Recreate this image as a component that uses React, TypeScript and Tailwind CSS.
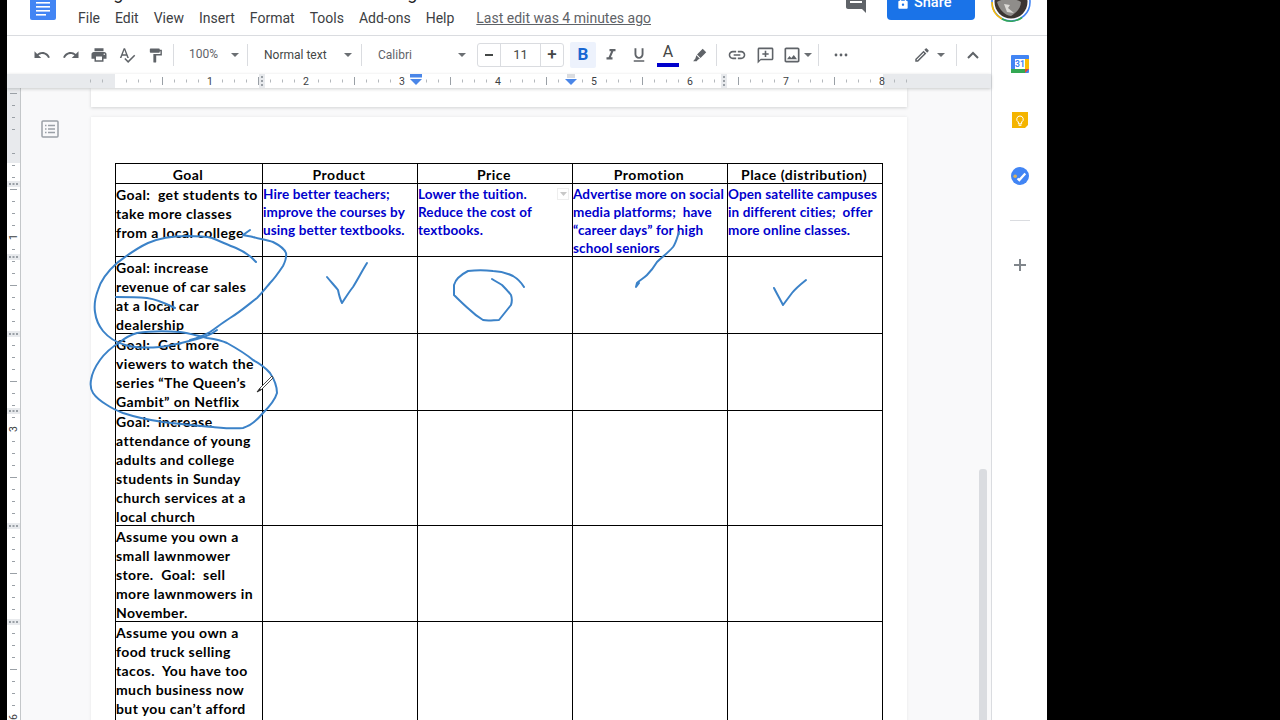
import React from "react";

const Ico = ({ d, s = 18, c = "#5f6368" }: { d: string; s?: number; c?: string }) => (
  <svg width={s} height={s} viewBox="0 0 24 24" fill={c}><path d={d} /></svg>
);
const Box = ({ children, className = "" }: { children: React.ReactNode; className?: string }) => (
  <span className={"flex w-7 shrink-0 items-center justify-center " + className}>{children}</span>
);
const Caret = ({ className = "" }: { className?: string }) => (
  <span className={"flex w-[10px] shrink-0 justify-center " + className}>
    <svg width="8" height="4" viewBox="0 0 8 4" fill="#6b6f73"><path d="M0 0h8L4 4z" /></svg>
  </span>
);
const Sep = ({ className = "" }: { className?: string }) => <span className={"h-[22px] w-px shrink-0 bg-[#dadce0] " + className} />;

const P = {
  undo: "M12.5 8c-2.65 0-5.05.99-6.9 2.6L2 7v9h9l-3.62-3.62c1.39-1.16 3.16-1.88 5.12-1.88 3.54 0 6.55 2.31 7.6 5.5l2.37-.78C21.08 11.03 17.15 8 12.5 8z",
  redo: "M18.4 10.6C16.55 8.99 14.15 8 11.5 8c-4.65 0-8.58 3.03-9.96 7.22L3.9 16c1.05-3.19 4.05-5.5 7.6-5.5 1.95 0 3.73.72 5.12 1.88L13 16h9V7l-3.6 3.6z",
  print: "M19 8H5c-1.66 0-3 1.34-3 3v6h4v4h12v-4h4v-6c0-1.66-1.34-3-3-3zm-3 11H8v-5h8v5zm3-7c-.55 0-1-.45-1-1s.45-1 1-1 1 .45 1 1-.45 1-1 1zm-1-9H6v4h12V3z",
  spell: "M12.45 16h2.09L9.43 3H7.57L2.46 16h2.09l1.12-3h5.64l1.14 3zm-6.02-5L8.5 5.48 10.57 11H6.43zm15.16.59l-8.09 8.09L9.83 16l-1.41 1.41 5.09 5.09L23 13l-1.41-1.41z",
  paint: "M18 4V3c0-.55-.45-1-1-1H5c-.55 0-1 .45-1 1v4c0 .55.45 1 1 1h12c.55 0 1-.45 1-1V6h1v4H9v11c0 .55.45 1 1 1h2c.55 0 1-.45 1-1v-9h8V4h-3z",
  link: "M3.9 12c0-1.71 1.39-3.1 3.1-3.1h4V7H7c-2.76 0-5 2.24-5 5s2.24 5 5 5h4v-1.9H7c-1.71 0-3.1-1.39-3.1-3.1zM8 13h8v-2H8v2zm9-6h-4v1.9h4c1.71 0 3.1 1.39 3.1 3.1s-1.39 3.1-3.1 3.1h-4V17h4c2.76 0 5-2.24 5-5s-2.24-5-5-5z",
  addc: "M20 2H4c-1.1 0-2 .9-2 2v18l4-4h14c1.1 0 2-.9 2-2V4c0-1.1-.9-2-2-2zm0 14H6l-2 2V4h16v12zm-9-2h2v-3h3V9h-3V6h-2v3H8v2h3z",
  img: "M19 5v14H5V5h14m0-2H5c-1.1 0-2 .9-2 2v14c0 1.1.9 2 2 2h14c1.1 0 2-.9 2-2V5c0-1.1-.9-2-2-2zm-4.86 8.86l-3 3.87L9 13.14 6 17h12l-3.86-5.14z",
  pencil: "M14.06 9.02l.92.92L5.92 19H5v-.92l9.06-9.06M17.66 3c-.25 0-.51.1-.7.29l-1.83 1.83 3.75 3.75 1.83-1.83c.39-.39.39-1.02 0-1.41l-2.34-2.34c-.2-.2-.45-.29-.71-.29zm-3.6 3.19L3 17.25V21h3.75L17.81 9.94l-3.75-3.75z",
  pen: "M16.5 2.5l5 5-8 8-5-5zM7.5 11.5l5 5-2.5 1.2-2 2.3H3l3.2-3.6z",
  comment: "M4 2h16c1.1 0 2 .9 2 2v18l-4-4H4c-1.1 0-2-.9-2-2V4c0-1.1.9-2 2-2zm2 10h12v-2H6v2zm0-3h12V7H6v2zm0-3h12V4H6v2z",
  lock: "M18 8h-1V6c0-2.76-2.24-5-5-5S7 3.24 7 6v2H6c-1.1 0-2 .9-2 2v10c0 1.1.9 2 2 2h12c1.1 0 2-.9 2-2V10c0-1.1-.9-2-2-2zm-6 9c-1.1 0-2-.9-2-2s.9-2 2-2 2 .9 2 2-.9 2-2 2zm3.1-9H8.9V6c0-1.71 1.39-3.1 3.1-3.1 1.71 0 3.1 1.39 3.1 3.1v2z",
  italic: "M10 4v3h2.21l-3.42 8H6v3h8v-3h-2.21l3.42-8H18V4z",
  under: "M12 17c3.31 0 6-2.69 6-6V3h-2.5v8c0 1.93-1.57 3.5-3.5 3.5S8.5 12.93 8.5 11V3H6v8c0 3.31 2.69 6 6 6zm-7 2v2h14v-2H5z",
};

const Ruler = () => {
  const ox = 7;
  const ticks: React.ReactNode[] = [];
  for (let x = 90; x <= 906; x += 12) {
    const rel = x - 114;
    if (rel % 96 === 0) continue;
    const half = rel % 48 === 0;
    ticks.push(<rect key={x} x={x - ox} y={half ? 3 : 5.5} width="1" height={half ? 8 : 3} fill={half ? "#9aa0a6" : "#b4b8bc"} />);
  }
  return (
    <svg width="984" height="14" viewBox="0 0 984 14" className="block">
      <rect width="984" height="14" fill="#e8eaed" />
      <rect x={115 - ox} width={768} height="14" fill="#fff" />
      {ticks}
      {[1, 2, 3, 4, 5, 6, 7, 8].map((n) => (
        <text key={n} x={114 + n * 96 - ox} y="11" textAnchor="middle" fontSize="10.5" fill="#3c4043" fontFamily="Roboto, sans-serif">{n}</text>
      ))}
      {[262, 724].map((x) => (
        <g key={x}>
          <rect x={x - 3 - ox} width="6" height="14" fill="#e8eaed" />
          {[2, 6, 10].map((y) => <rect key={y} x={x - 1 - ox} y={y} width="2" height="2" fill="#9aa0a6" />)}
        </g>
      ))}
      <rect x={410 - ox} y="0" width="12" height="3.5" fill="#4a86e8" />
      <path d={`M${410 - ox} 5h12l-6 6z`} fill="#4a86e8" />
      <rect x={567 - ox} y="0" width="8" height="4" fill="#dadce0" />
      <path d={`M${565 - ox} 5h12l-6 6z`} fill="#4a86e8" />
    </svg>
  );
};

const VRuler = () => {
  const items: React.ReactNode[] = [];
  for (let y = 93; y <= 720; y += 12) {
    const rel = y - 141;
    if (rel % 96 === 0) continue;
    const half = rel % 48 === 0;
    items.push(<rect key={y} x={half ? 3 : 5} y={y - 88} width={half ? 7 : 3} height="1" fill="#9aa0a6" />);
  }
  return (
    <svg width="14" height="632" viewBox="0 0 14 632" className="block">
      <rect width="13" height="632" fill="#fff" />
      <rect width="13" height="75" fill="#e8eaed" />
      {items}
      <rect x="13" width="1" height="632" fill="#c4c7c9" />
      {[1, 3, 6].map((n) => (
        <text key={n} x="6.5" y={141 + n * 96 - 88} textAnchor="middle" dominantBaseline="central" fontSize="10.5" fill="#3c4043" fontFamily="Roboto, sans-serif" transform={`rotate(-90 6.5 ${141 + n * 96 - 88})`}>{n}</text>
      ))}
      {[184, 257, 334, 411, 526, 622].map((y) => (
        <g key={y}>
          <rect y={y - 3 - 88} width="13" height="6" fill="#e8eaed" />
          {[2.5, 6, 9.5].map((x) => <rect key={x} x={x - 0.5} y={y - 1 - 88} width="2" height="2" fill="#9aa0a6" />)}
        </g>
      ))}
    </svg>
  );
};

const bold = "whitespace-pre pt-px text-[14px] font-bold leading-[19px] tracking-[0.4px] text-black";
const blue = "whitespace-pre pt-px text-[13.5px] font-bold leading-[18px] tracking-[0.13px] text-[#0000cc]";
const cell = "box-border overflow-visible border-b border-r border-black";
const head = cell + " flex items-center justify-center pr-[2px] pt-px text-[14px] font-bold leading-[19px] tracking-[0.5px] text-black";

const Table = () => (
  <div className="grid w-[768px] grid-cols-[147px_155px_155px_155px_155px] grid-rows-[20px_73px_77px_77px_115px_96px_110px] border-l border-t border-black font-[Lato,sans-serif]">
    {["Goal", "Product", "Price", "Promotion", "Place (distribution)"].map((h) => <div key={h} className={head}>{h}</div>)}

    <div className={cell}><div className={bold}>{"Goal:  get students to\ntake more classes\nfrom a local college"}</div></div>
    <div className={cell}><div className={blue}>{"Hire better teachers;\nimprove the courses by\nusing better textbooks."}</div></div>
    <div className={cell + " relative"}>
      <div className={blue}>{"Lower the tuition.\nReduce the cost of\ntextbooks."}</div>
      <span className="absolute left-[139px] top-[4px] flex h-[12px] w-[12px] items-center justify-center border border-[#eeeeee]">
        <svg width="7" height="4" viewBox="0 0 7 4" fill="#c8c8c8"><path d="M0 0h7L3.5 4z" /></svg>
      </span>
    </div>
    <div className={cell}><div className={blue}>{"Advertise more on social\nmedia platforms;  have\n“career days” for high\nschool seniors"}</div></div>
    <div className={cell}><div className={blue}>{"Open satellite campuses\nin different cities;  offer\nmore online classes."}</div></div>

    <div className={cell}><div className={bold}>{"Goal: increase\nrevenue of car sales\nat a local car\ndealership"}</div></div>
    <div className={cell} /><div className={cell} /><div className={cell} /><div className={cell} />

    <div className={cell}><div className={bold}>{"Goal:  Get more\nviewers to watch the\nseries “The Queen’s\nGambit” on Netflix"}</div></div>
    <div className={cell} /><div className={cell} /><div className={cell} /><div className={cell} />

    <div className={cell}><div className={bold}>{"Goal:  increase\nattendance of young\nadults and college\nstudents in Sunday\nchurch services at a\nlocal church"}</div></div>
    <div className={cell} /><div className={cell} /><div className={cell} /><div className={cell} />

    <div className={cell}><div className={bold}>{"Assume you own a\nsmall lawnmower\nstore.  Goal:  sell\nmore lawnmowers in\nNovember."}</div></div>
    <div className={cell} /><div className={cell} /><div className={cell} /><div className={cell} />

    <div className={cell}><div className={bold}>{"Assume you own a\nfood truck selling\ntacos.  You have too\nmuch business now\nbut you can’t afford"}</div></div>
    <div className={cell} /><div className={cell} /><div className={cell} /><div className={cell} />
  </div>
);

const inkPaths = [
  "M256 262C250 255 243 251 236 248C228 245 222 242 212 238C205 236 196 236 186 236C175 236 162 237 148 243C135 249 125 257 117 263C108 271 101 280 98 290C95 298 94 305 95 312C96 320 99 326 103 331C108 337 115 342 125 345C135 348 148 348 160 347C172 346 185 342 197 339C205 337 212 334 217 330",
  "M250 230L243 235C247 236 250 236 253 237C260 239 267 240 273 242C279 245 284 248 286 253C287 258 285 262 283 266C279 272 275 278 270 283C265 289 262 293 257 298C249 304 240 312 230 318C222 323 216 328 210 332C203 336 197 338 190 340",
  "M116 297C125 297 136 297 147 298C155 299 165 303 175 308",
  "M120 342C112 347 105 353 100 360C95 367 92 373 91 380C90 386 91 390 93 393C97 399 102 402 107 405C113 409 118 411 123 413C135 417 149 420 163 422C180 424 197 426 213 427C224 428 234 429 243 428C250 426 258 419 263 413C269 407 275 400 277 393C277 385 274 379 270 373C265 367 259 363 253 360C246 354 236 348 227 343C221 340 214 339 207 338C198 336 189 333 180 332C165 331 150 331 137 333C130 335 125 338 120 342",
  "M327 277C331 282 335 286 338 290C339 295 340 299 342 303C346 297 349 292 353 287C358 279 362 271 367 263",
  "M524 287C521 282 518 279 513 276C507 273 500 271 493 271C485 270 476 270 468 271C464 273 461 275 458 278C456 280 455 282 454 285L454 295C459 300 464 305 470 310C474 314 478 317 483 320C488 321 494 320 499 320C503 315 507 310 511 305C512 302 512 298 511 295C508 291 505 288 502 285C499 283 495 281 492 279",
  "M679 232C677 238 676 243 673 247C669 252 662 257 657 262C654 267 651 271 647 275C644 278 640 280 637 283L636 287L639 283",
  "M774 288C777 294 780 299 783 305C786 301 789 297 792 293C796 288 801 284 806 280",
];

export default function App() {
  return (
    <div className="relative flex h-[720px] w-[1280px] overflow-hidden bg-black font-[Roboto,sans-serif]">
      <div className="ml-[7px] flex h-full w-[1040px] flex-col bg-white">
        {/* header */}
        <header className="box-border flex h-9 shrink-0 items-start overflow-hidden border-b border-[#dadce0]">
          <svg className="ml-[23px] -mt-[16px] shrink-0" width="26" height="36" viewBox="0 0 26 36">
            <rect width="26" height="36" rx="2" fill="#4285f4" />
            <rect x="6" y="18" width="14" height="1.6" fill="#fff" />
            <rect x="6" y="22" width="14" height="1.6" fill="#fff" />
            <rect x="6" y="26" width="14" height="1.6" fill="#fff" />
            <rect x="6" y="30" width="10" height="1.6" fill="#fff" />
          </svg>
          <div className="ml-[22px] flex flex-col">
            <div className="-mt-[19px] h-6 whitespace-pre text-[18px] leading-6 text-[#202124]">Using the 4 Ps to Reach Our Business Targets</div>
            <div className="mt-[3px] flex items-center gap-[15px] text-[14px] leading-5 text-[#3c4043]">
              {["File", "Edit", "View", "Insert", "Format", "Tools", "Add-ons", "Help"].map((m) => <span key={m}>{m}</span>)}
              <span className="ml-[7px] text-[14px] text-[#5f6368] underline">Last edit was 4 minutes ago</span>
            </div>
          </div>
          <svg className="ml-auto -mt-[9px] shrink-0" width="24" height="24" viewBox="0 0 24 24" fill="#5f6368"><path d={P.comment} /></svg>
          <div className="ml-[19px] -mt-[16px] flex h-9 w-[88px] shrink-0 items-center gap-[4px] rounded-[4px] bg-[#1a73e8] pl-[9px] pt-[1px] text-[14.5px] font-medium text-white">
            <Ico d={P.lock} s={14} c="#fff" />Share
          </div>
          <svg className="ml-[16px] mr-[16px] -mt-[18px] shrink-0" width="40" height="40" viewBox="0 0 40 40">
            <circle cx="20" cy="20" r="19" fill="none" stroke="#4285f4" strokeWidth="1.6" />
            <path d="M1 20A19 19 0 0 0 11 37" fill="none" stroke="#fbbc04" strokeWidth="1.6" />
            <path d="M11 37A19 19 0 0 0 31 35.5" fill="none" stroke="#34a853" strokeWidth="1.6" />
            <circle cx="20" cy="20" r="16.5" fill="#3b3532" />
            <path d="M6 20C10 17 22 15 30 20C30 26 25 31 20 34C13 33 8 27 6 20z" fill="#8f8d8a" />
            <path d="M13 22l6 1-2 3 6 5-7-1z" fill="#dcdad6" />
          </svg>
        </header>

        <div className="flex min-h-0 flex-1">
          <main className="flex w-[984px] shrink-0 flex-col">
            {/* toolbar */}
            <div className="flex h-[38px] shrink-0 items-center pl-[21px] text-[12px] text-[#444746]">
              <Box className="mr-px"><Ico d={P.undo} /></Box>
              <Box><Ico d={P.redo} /></Box>
              <Box><Ico d={P.print} /></Box>
              <Box><Ico d={P.spell} /></Box>
              <Box><Ico d={P.paint} s={17} /></Box>
              <Sep className="ml-[4px]" />
              <span className="ml-[15px] w-[29px] shrink-0 -translate-y-px whitespace-pre text-[#5f6368]">100%</span>
              <Caret className="ml-[12px]" />
              <Sep className="ml-[7px]" />
              <span className="ml-[16px] w-[63px] shrink-0 whitespace-pre">Normal text</span>
              <Caret className="ml-[16px]" />
              <Sep className="ml-[8px]" />
              <span className="ml-[16px] w-[34px] shrink-0 whitespace-pre text-[#5f6368]">Calibri</span>
              <Caret className="ml-[45px]" />
              <div className="ml-[10px] box-border flex h-[24px] w-[87px] shrink-0 items-stretch rounded-[3px] border border-[#dadce0] text-[13px] text-[#444746]">
                <span className="flex w-[23px] items-center justify-center border-r border-[#dadce0]"><span className="h-[2px] w-[8px] bg-[#444746]" /></span>
                <span className="flex w-[39px] items-center justify-center">11</span>
                <span className="flex flex-1 items-center justify-center border-l border-[#dadce0] text-[17px] font-medium">+</span>
              </div>
              <span className="ml-[6px] flex h-[26px] w-[26px] shrink-0 items-center justify-center rounded-[2px] bg-[#edf2fc] text-[17px] font-bold text-[#1967d2]">B</span>
              <Box className="ml-px"><Ico d={P.italic} s={18} /></Box>
              <Box><Ico d={P.under} s={18} /></Box>
              <Box className="ml-px">
                <span className="flex flex-col items-center text-[16px] leading-[15px] text-[#444746]"><span>A</span><span className="mt-[4px] h-[4px] w-[22px] bg-[#0000cc]" /></span>
              </Box>
              <Box className="ml-[3px]"><Ico d={P.pen} s={17} /></Box>
              <Sep className="ml-[3px]" />
              <Box className="ml-[6px]"><Ico d={P.link} s={20} /></Box>
              <Box><Ico d={P.addc} s={19} /></Box>
              <Box className="-ml-px"><Ico d={P.img} s={20} /></Box>
              <Caret className="-ml-[3px]" />
              <Sep className="ml-[5px]" />
              <Box className="ml-[8px]">
                <svg width="14" height="4" viewBox="0 0 14 4" fill="#5f6368"><circle cx="2" cy="2" r="1.4" /><circle cx="7" cy="2" r="1.4" /><circle cx="12" cy="2" r="1.4" /></svg>
              </Box>
              <Box className="ml-[53px]"><Ico d={P.pencil} s={18} /></Box>
              <Caret />
              <Sep className="ml-[10px]" />
              <Box className="ml-[2px]">
                <svg width="12" height="8" viewBox="0 0 12 8" fill="none" stroke="#5f6368" strokeWidth="2"><path d="M1 7l5-5 5 5" /></svg>
              </Box>
            </div>

            {/* ruler */}
            <div className="z-10 h-[14px] shrink-0 shadow-[0_1px_3px_rgba(60,64,67,0.25)]"><Ruler /></div>

            <div className="flex min-h-0 flex-1">
              <div className="w-[14px] shrink-0 overflow-hidden"><VRuler /></div>
              <div className="relative min-w-0 flex-1 overflow-hidden bg-[#f9f9fa] pl-[70px]">
                <div className="mb-[10px] h-[19px] w-[816px] bg-white shadow-[0_1px_3px_rgba(60,64,67,0.2)]" />
                <div className="box-border h-[700px] w-[816px] bg-white pl-[24px] pt-[46px] shadow-[0_0_3px_rgba(60,64,67,0.1)]">
                  <Table />
                </div>
                <svg className="absolute left-[20px] top-[32px]" width="18" height="18" viewBox="0 0 18 18" fill="none" stroke="#9aa0a6" strokeWidth="1.5">
                  <rect x="1" y="1" width="16" height="16" rx="1" />
                  <path d="M4 5.5h1.5M4 9h1.5M4 12.5h1.5M7 5.5h7M7 9h7M7 12.5h7" />
                </svg>
                <div className="absolute left-[958px] top-[381px] h-[260px] w-[8px] rounded-t-[3px] bg-[#dadce0]" />
              </div>
            </div>
          </main>

          {/* side panel */}
          <aside className="box-border flex w-[56px] shrink-0 flex-col items-center border-l border-[#dadce0] bg-white pl-px pt-[19px]">
            <svg width="18" height="18" viewBox="0 0 18 18">
              <rect width="18" height="18" rx="1" fill="#4285f4" />
              <rect x="14" y="4" width="4" height="10" fill="#fbbc04" />
              <rect y="14" width="14" height="4" fill="#34a853" />
              <path d="M14 14h4l-4 4z" fill="#ea4335" />
              <rect x="4" y="4" width="10" height="10" fill="#fff" />
              <text x="9" y="12.4" textAnchor="middle" fontSize="8.5" fontWeight="700" fill="#4285f4" fontFamily="Roboto, sans-serif">31</text>
            </svg>
            <svg className="mt-[39px]" width="16" height="18" viewBox="0 0 16 18">
              <path d="M0 0h16v13l-3 3H0z" fill="#f4b400" />
              <path d="M8 4a3.2 3.2 0 0 1 1.6 6v1.8H6.4V10A3.2 3.2 0 0 1 8 4z" fill="none" stroke="#fff" strokeWidth="1" />
              <rect x="6.6" y="12.6" width="2.8" height="1.2" fill="#fff" />
            </svg>
            <svg className="mt-[37px]" width="18" height="18" viewBox="0 0 18 18">
              <circle cx="9" cy="9" r="9" fill="#4285f4" />
              <circle cx="4.2" cy="9.3" r="1.8" fill="#d9b25f" />
              <path d="M6.5 11.5l1.8 1.6 6-6.6" fill="none" stroke="#fff" strokeWidth="2.2" />
            </svg>
            <span className="mt-[35px] h-px w-[20px] bg-[#dadce0]" />
            <svg className="mt-[38px]" width="12" height="12" viewBox="0 0 12 12" fill="#80868b"><path d="M5 0h2v5h5v2H7v5H5V7H0V5h5z" /></svg>
          </aside>
        </div>
      </div>

      {/* handwriting drawn over the document */}
      <svg className="pointer-events-none absolute left-0 top-0" width="1280" height="720" viewBox="0 0 1280 720" fill="none">
        {inkPaths.map((d, i) => <path key={i} d={d} stroke="#3b82c8" strokeWidth="2" strokeLinecap="round" strokeLinejoin="round" />)}
        <path d="M272 376L260 388L257 392L261 390L273 378Z" fill="#fff" stroke="#222" strokeWidth="0.8" />
        <path d="M257 392L260 388L261 390Z" fill="#222" />
      </svg>
    </div>
  );
}
